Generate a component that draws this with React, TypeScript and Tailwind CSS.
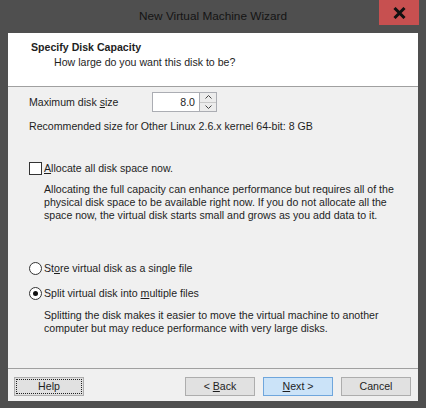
const font = { fontFamily: '"Liberation Sans", Arial, sans-serif' }

function U({ children }: { children: string }) {
  return <span className="underline underline-offset-[1px]">{children}</span>
}

function Btn({
  children,
  primary,
  focus,
}: {
  children: React.ReactNode
  primary?: boolean
  focus?: boolean
}) {
  return (
    <div
      className={
        'flex h-[19px] w-[70px] items-center justify-center border text-[10.6px] ' +
        (primary ? 'border-[#6fa6dc] bg-[#cbe3f8]' : 'border-[#adadad] bg-[#e1e1e1]') +
        (focus ? ' outline outline-1 outline-dotted outline-[#222] outline-offset-[-3px]' : '')
      }
    >
      <span className="whitespace-pre">{children}</span>
    </div>
  )
}

export default function App() {
  return (
    <div
      className="flex h-[408px] w-[426px] flex-col bg-[#4f4f4f] text-[#1e1e1e]"
      style={font}
    >
      {/* Title bar */}
      <div className="flex h-[33px] shrink-0 items-start">
        <div className="w-[47px]" />
        <div className="flex h-[33px] flex-1 items-center justify-center text-[11.8px] text-[#141414]">
          New Virtual Machine Wizard
        </div>
        <div className="mr-[7px] flex h-[25px] w-[40px] items-center justify-center bg-[#c75050]">
          <svg width="13" height="12" viewBox="0 0 13 12">
            <path d="M1.5 1 L11.5 11 M11.5 1 L1.5 11" stroke="#111" strokeWidth="3" />
          </svg>
        </div>
      </div>

      {/* Client area */}
      <div className="mx-[8px] flex h-[368px] flex-col bg-[#f0f0f0]">
        <div className="h-[54px] shrink-0 border-b border-[#a0a0a0] bg-white pt-[7px]">
          <div className="pl-[23px] text-[10.6px] font-bold leading-[15px]">Specify Disk Capacity</div>
          <div className="pl-[46px] text-[10.6px] leading-[15px]">
            How large do you want this disk to be?
          </div>
        </div>

        <div className="flex flex-1 flex-col pl-[21px] text-[10.6px] leading-[13px]">
          <div className="mt-[5px] flex h-[20px] items-center">
            <div className="w-[123px]">
              Maximum disk <U>s</U>ize
            </div>
            <div className="flex h-[20px]">
              <div className="flex w-[48px] items-center justify-end border border-[#abadb3] bg-white pr-[4px]">
                8.0
              </div>
              <div className="flex w-[17px] flex-col border border-l-0 border-[#abadb3] bg-[#ececec]">
                <div className="flex flex-1 items-center justify-center border-b border-[#c8c8c8]">
                  <svg width="7" height="4" viewBox="0 0 7 4">
                    <path d="M0.5 3.5 L3.5 0.5 L6.5 3.5" fill="none" stroke="#444" />
                  </svg>
                </div>
                <div className="flex flex-1 items-center justify-center">
                  <svg width="7" height="4" viewBox="0 0 7 4">
                    <path d="M0.5 0.5 L3.5 3.5 L6.5 0.5" fill="none" stroke="#444" />
                  </svg>
                </div>
              </div>
            </div>
          </div>

          <div className="mt-[8px]">Recommended size for Other Linux 2.6.x kernel 64-bit: 8 GB</div>

          <div className="mt-[29px] flex h-[13px] items-center">
            <div className="h-[13px] w-[13px] border border-[#333] bg-white" />
            <div className="ml-[2px]">
              <U>A</U>llocate all disk space now.
            </div>
          </div>

          <div className="mt-[8px] pl-[15px]">
            Allocating the full capacity can enhance performance but requires all of the
            <br />
            physical disk space to be available right now. If you do not allocate all the
            <br />
            space now, the virtual disk starts small and grows as you add data to it.
          </div>

          <div className="mt-[40px] flex h-[13px] items-center">
            <div className="h-[13px] w-[13px] rounded-full border border-[#333] bg-white" />
            <div className="ml-[2px]">
              St<U>o</U>re virtual disk as a single file
            </div>
          </div>

          <div className="mt-[12px] flex h-[13px] items-center">
            <div className="flex h-[13px] w-[13px] items-center justify-center rounded-full border border-[#333] bg-white">
              <div className="h-[5px] w-[5px] rounded-full bg-[#111]" />
            </div>
            <div className="ml-[2px]">
              Split virtual disk into <U>m</U>ultiple files
            </div>
          </div>

          <div className="mt-[9px] pl-[15px]">
            Splitting the disk makes it easier to move the virtual machine to another
            <br />
            computer but may reduce performance with very large disks.
          </div>
        </div>

        <div className="flex h-[33px] shrink-0 items-start border-t border-[#a0a0a0] pt-[8px]">
          <div className="ml-[6px]">
            <Btn focus>Help</Btn>
          </div>
          <div className="ml-auto flex gap-[8px] pr-[7px]">
            <Btn>
              {'< '}
              <U>B</U>ack
            </Btn>
            <Btn primary>
              <U>N</U>
              {'ext >'}
            </Btn>
            <Btn>Cancel</Btn>
          </div>
        </div>
      </div>
    </div>
  )
}
